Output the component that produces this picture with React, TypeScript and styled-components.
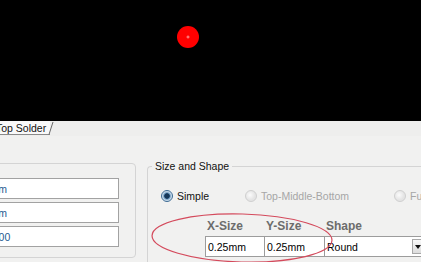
import React from "react";
import styled, { createGlobalStyle } from "styled-components";

const Global = createGlobalStyle`
  html, body {
    margin: 0;
    padding: 0;
    overflow: hidden;
    background: #f1f1f0;
  }
  body {
    font-family: "Liberation Sans", Arial, sans-serif;
    font-size: 10.5px;
    color: #000;
  }
`;

const Page = styled.div`
  position: relative;
  width: 421px;
  height: 262px;
  overflow: hidden;
  display: flex;
  flex-direction: column;
  background: #f1f1f0;
`;

const Canvas = styled.div`
  height: 121px;
  background: #000;
  flex-shrink: 0;
`;

const TabStrip = styled.div`
  height: 15px;
  display: flex;
  align-items: stretch;
  flex-shrink: 0;
  background: #eeeeed;
`;

const Tab = styled.div`
  display: flex;
  align-items: center;
  height: 13px;
  padding-right: 4px;
  margin-left: -4px;
  background: #f9f9f9;
  border-bottom: 1px solid #8a8a8a;
  font-size: 10.5px;
  color: #111;
  white-space: nowrap;
`;

const TabEdge = styled.svg`
  display: block;
  width: 6px;
  height: 15px;
  margin-left: -2px;
`;

const Body = styled.div`
  flex: 1;
  display: flex;
  align-items: flex-start;
`;

const LeftGroup = styled.div`
  flex-shrink: 0;
  margin-top: 27px;
  margin-left: -60px;
  width: 196px;
  height: 95px;
  box-sizing: border-box;
  border: 1px solid #d4d4d4;
  border-radius: 4px;
  padding: 14px 16px 0 0;
  display: flex;
  flex-direction: column;
  gap: 3px;
`;

const Field = styled.div<{ $indent: number }>`
  height: 21px;
  box-sizing: border-box;
  border: 1px solid #a2a2a2;
  background: #fff;
  display: flex;
  align-items: center;
  padding-left: ${(p) => p.$indent}px;
  color: #1f5a8f;
  white-space: nowrap;
  overflow: hidden;
`;

const Group = styled.fieldset`
  flex: 1;
  min-width: 0;
  margin: 24px 0 0 11px;
  padding: 0;
  border: 1px solid #d4d4d4;
  border-right: none;
  border-bottom: none;
  border-top-left-radius: 4px;
  height: 140px;
`;

const Legend = styled.legend`
  margin-left: 4px;
  padding: 0 3px;
  line-height: 12px;
  color: #111;
`;

const RadioRow = styled.div`
  display: flex;
  align-items: center;
  height: 14px;
  margin: 17px 0 0 13px;
  white-space: nowrap;
`;

const RadioItem = styled.div<{ $w?: number; $off?: boolean }>`
  display: flex;
  align-items: center;
  gap: 4px;
  width: ${(p) => (p.$w ? `${p.$w}px` : "auto")};
  flex-shrink: 0;
  color: ${(p) => (p.$off ? "#a6a6a6" : "#111")};
`;

const RadioDot = styled.span<{ $on?: boolean; $off?: boolean }>`
  width: 12px;
  height: 12px;
  box-sizing: border-box;
  border-radius: 50%;
  border: 1px solid ${(p) => (p.$off ? "#cfcfcf" : "#3c6a93")};
  background: ${(p) =>
    p.$on
      ? "radial-gradient(circle, #16385a 0 2.4px, #5f8fb8 3px, #bcd3e6 4.2px, #eef3f8 5.5px)"
      : "radial-gradient(circle at 40% 40%, #fbfbfb 0, #e4e4e4 5px)"};
`;

const Table = styled.div`
  display: grid;
  grid-template-columns: 59px 60px 106px;
  margin: 16px 0 0 57px;
`;

const Head = styled.div`
  height: 17px;
  padding-left: 2px;
  font-size: 12px;
  font-weight: bold;
  color: #6c6c6c;
  line-height: 14px;
  white-space: nowrap;
`;

const Cell = styled.div<{ $last?: boolean }>`
  height: 21px;
  box-sizing: border-box;
  border: 1px solid #9c9c9c;
  border-right: ${(p) => (p.$last ? "1px solid #9c9c9c" : "none")};
  background: #fff;
  display: flex;
  align-items: center;
  padding-left: 2px;
  white-space: nowrap;
`;

const ComboText = styled.span`
  flex: 1;
`;

const ComboButton = styled.div`
  width: 16px;
  height: 15px;
  box-sizing: border-box;
  margin-right: 1px;
  border: 1px solid #a8a8a8;
  background: linear-gradient(#fafafa, #dcdcdc);
  display: flex;
  align-items: center;
  justify-content: center;
`;

const Arrow = styled.span`
  width: 0;
  height: 0;
  border-left: 3.5px solid transparent;
  border-right: 3.5px solid transparent;
  border-top: 4px solid #111;
  margin-right: 4px;
`;

const Mark = styled.svg`
  position: absolute;
  left: 0;
  top: 0;
  pointer-events: none;
`;

export default function App() {
  return (
    <>
      <Global />
      <Page>
        <Canvas>
          <svg width="421" height="121" viewBox="0 0 421 121">
            <circle cx="188" cy="37" r="11" fill="#ff0000" />
            <line x1="186.5" y1="37" x2="189.5" y2="37" stroke="#ff9a9a" strokeWidth="1" />
            <line x1="188" y1="35.5" x2="188" y2="38.5" stroke="#ff9a9a" strokeWidth="1" />
          </svg>
        </Canvas>
        <TabStrip>
          <Tab>Top Solder</Tab>
          <TabEdge viewBox="0 0 6 15">
            <line x1="1" y1="13.5" x2="5" y2="1" stroke="#6a6a6a" strokeWidth="1" />
          </TabEdge>
        </TabStrip>
        <Body>
          <LeftGroup>
            <Field $indent={27}>0.25mm</Field>
            <Field $indent={27}>0.25mm</Field>
            <Field $indent={42}>0.000</Field>
          </LeftGroup>
          <Group>
            <Legend>Size and Shape</Legend>
            <RadioRow>
              <RadioItem $w={84}>
                <RadioDot $on />
                Simple
              </RadioItem>
              <RadioItem $w={149} $off>
                <RadioDot $off />
                Top-Middle-Bottom
              </RadioItem>
              <RadioItem $off>
                <RadioDot $off />
                Full Stack
              </RadioItem>
            </RadioRow>
            <Table>
              <Head>X-Size</Head>
              <Head>Y-Size</Head>
              <Head>Shape</Head>
              <Cell>0.25mm</Cell>
              <Cell>0.25mm</Cell>
              <Cell $last>
                <ComboText>Round</ComboText>
                <ComboButton>
                  <Arrow />
                </ComboButton>
              </Cell>
            </Table>
          </Group>
        </Body>
        <Mark width="421" height="262" viewBox="0 0 421 262">
          <ellipse
            cx="242"
            cy="238"
            rx="90"
            ry="24"
            fill="none"
            stroke="#d44a5c"
            strokeWidth="1.2"
            transform="rotate(1.5 242 238)"
          />
        </Mark>
      </Page>
    </>
  );
}
